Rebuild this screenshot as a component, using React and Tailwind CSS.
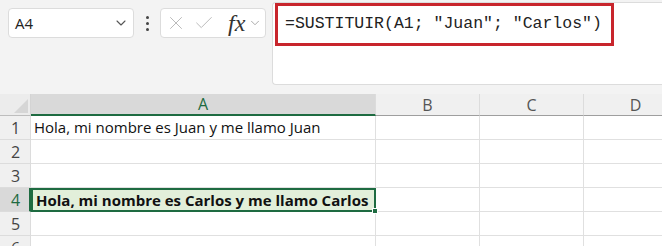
import { ChevronDown, X, Check } from 'lucide-react';

const cols = [
  { key: 'A', w: 'w-[345px]' },
  { key: 'B', w: 'w-[104px]' },
  { key: 'C', w: 'w-[104px]' },
  { key: 'D', w: 'w-[104px]' },
];

const rows = [
  { n: 1, text: 'Hola, mi nombre es Juan y me llamo Juan' },
  { n: 2 },
  { n: 3 },
  { n: 4, text: 'Hola, mi nombre es Carlos y me llamo Carlos', active: true },
  { n: 5 },
  { n: 6 },
];

function Toolbar() {
  return (
    <div className="flex h-[94px] bg-[#f3f3f3] pt-[2px]">
      <div className="flex h-[30px] items-start pl-[8px] pt-[6px]">
        <div className="flex h-[30px] w-[126px] items-center justify-between rounded-[4px] border border-[#dcdcdc] bg-white pl-[6px] pr-[4px] text-[15px] text-[#222]">
          <span>A4</span>
          <ChevronDown size={16} strokeWidth={1.6} className="text-[#555]" />
        </div>
        <div className="flex h-[30px] w-[26px] flex-col items-center justify-center gap-[3px]">
          <span className="h-[3px] w-[3px] rounded-full bg-[#444]" />
          <span className="h-[3px] w-[3px] rounded-full bg-[#444]" />
          <span className="h-[3px] w-[3px] rounded-full bg-[#444]" />
        </div>
        <div className="flex h-[30px] w-[106px] items-center rounded-[4px] border border-[#dcdcdc] bg-white pl-[4px]">
          <X size={22} strokeWidth={1} className="text-[#b5b5b5]" />
          <Check size={22} strokeWidth={1} className="ml-[6px] text-[#b5b5b5]" />
          <span className="ml-[13px] font-['Liberation_Serif',serif] text-[24px] italic leading-none text-[#333]">fx</span>
          <ChevronDown size={14} strokeWidth={1.4} className="ml-[3px] text-[#999]" />
        </div>
      </div>
      <div className="ml-[6px] h-[83px] flex-1 rounded-tl-[4px] rounded-bl-[4px] border border-r-0 border-[#dcdcdc] bg-white pl-[2px] pt-0">
        <div className="flex h-[43px] w-[339px] items-center border-[3px] border-[#c8252c] pl-[7px] font-['Liberation_Mono',monospace] text-[16.5px] text-[#222]">
          =SUSTITUIR(A1; "Juan"; "Carlos")
        </div>
      </div>
    </div>
  );
}

function Sheet() {
  return (
    <div className="font-['Open_Sans',sans-serif]">
      <div className="flex h-[22px] bg-[#f0f0f0]">
        <div className="relative w-[31px] shrink-0 border-b border-r border-[#d4d4d4] border-b-[#bdbdbd] bg-[#ececec]">
          <svg className="absolute bottom-[2px] right-[2px]" width="14" height="14" viewBox="0 0 14 14">
            <path d="M14 0 L14 14 L0 14 Z" fill="#d6d6d6" />
          </svg>
        </div>
        {cols.map((c) => (
          <div
            key={c.key}
            className={`${c.w} flex shrink-0 items-center justify-center border-r border-[#dcdcdc] text-[16px] leading-none ${
              c.key === 'A' ? 'border-b-2 border-b-[#1e6b41] bg-[#d9d9d9] text-[#1e6b41]' : 'border-b border-b-[#9e9e9e] text-[#555]'
            }`}
          >
            {c.key}
          </div>
        ))}
      </div>
      {rows.map((r) => (
        <div key={r.n} className="flex h-[24px]">
          <div
            className={`flex w-[31px] shrink-0 items-center border-b border-r border-[#dcdcdc] pl-[11px] text-[16px] ${
              r.active ? 'border-r-2 border-r-[#1e6b41] bg-[#d9d9d9] text-[#1e6b41]' : 'bg-[#f0f0f0] text-[#444]'
            }`}
          >
            {r.n}
          </div>
          {cols.map((c) =>
            c.key === 'A' && r.active ? (
              <div
                key={c.key}
                className={`${c.w} relative flex shrink-0 items-center border-2 border-[#1e6b41] bg-[#e2efda] pl-[3px] text-[15px] font-bold text-[#111]`}
              >
                {r.text}
                <span className="absolute -bottom-[4px] -right-[4px] h-[6px] w-[6px] border border-white bg-[#1e6b41]" />
              </div>
            ) : (
              <div
                key={c.key}
                className={`${c.w} flex shrink-0 items-center border-b border-r border-[#e0e0e0] bg-white pl-[3px] text-[15px] text-[#111]`}
              >
                {c.key === 'A' ? r.text : null}
              </div>
            )
          )}
        </div>
      ))}
    </div>
  );
}

export default function App() {
  return (
    <div className="h-[246px] w-[662px] overflow-hidden bg-white font-['Open_Sans',sans-serif]">
      <Toolbar />
      <Sheet />
    </div>
  );
}
